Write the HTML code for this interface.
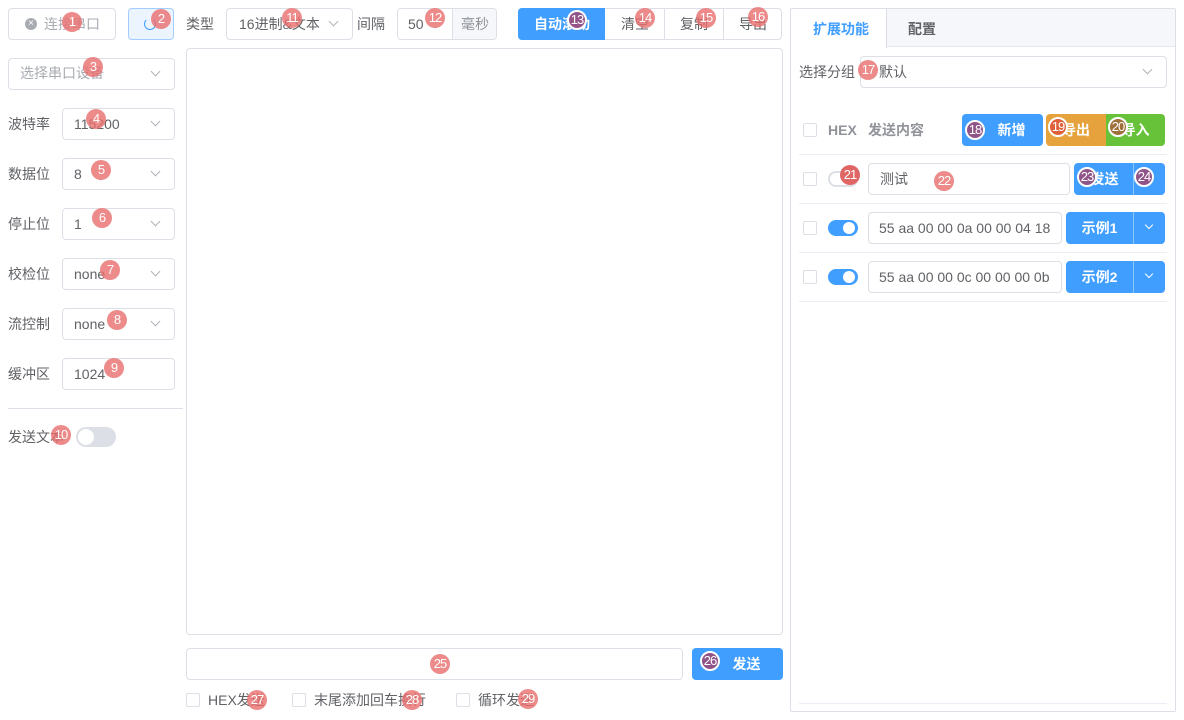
<!DOCTYPE html><html><head><meta charset="utf-8"><style>
*{box-sizing:border-box;margin:0;padding:0}
body{width:1184px;height:720px;background:#fff;position:relative;overflow:hidden;font-family:"Liberation Sans","Noto Sans CJK SC",sans-serif;font-size:14px;color:#606266}
.a{position:absolute}
.box{position:absolute;border:1px solid #dcdfe6;border-radius:4px;background:#fff}
.t{position:absolute;white-space:nowrap;line-height:20px}
.arr{position:absolute;width:7px;height:7px;border-right:1px solid #b0b3b8;border-bottom:1px solid #b0b3b8;transform:rotate(45deg)}
.b{position:absolute;width:20px;height:20px;border-radius:50%;background:rgba(232,110,110,.8);color:#fff;font-size:13px;text-align:center;line-height:20px;transform:translate(-10px,-10px);letter-spacing:-1px}
.p{background:rgba(150,80,130,.95);border:2px solid #fff;line-height:16px}
.cb{position:absolute;width:14px;height:14px;border:1px solid #dcdfe6;border-radius:2px;background:#fff}
.hr{position:absolute;height:1px;background:#ebeef5}
.btn{position:absolute;background:#409eff;color:#fff;text-align:center;font-weight:bold}
</style></head><body>
<!-- top left -->
<div class="box" style="left:8px;top:8px;width:108px;height:32px"></div>
<div class="a" style="left:25px;top:18px;width:12px;height:12px;border-radius:50%;background:#a8abb2;color:#fff;font-size:10px;line-height:12px;text-align:center">×</div>
<div class="t" style="left:44px;top:14px;color:#a8abb2">连接串口</div>
<div class="box" style="left:128px;top:8px;width:46px;height:32px;background:#ecf5ff;border-color:#a0cfff"></div>
<div class="a" style="left:144px;top:18px;width:12px;height:12px;border:1.5px solid #409eff;border-radius:50%;border-top-color:transparent"></div>
<div class="t" style="left:186px;top:14px">类型</div>
<div class="box" style="left:226px;top:8px;width:127px;height:32px"></div>
<div class="t" style="left:239px;top:14px">16进制&amp;文本</div>
<div class="arr" style="left:330px;top:18px"></div>
<div class="t" style="left:357px;top:14px">间隔</div>
<div class="box" style="left:397px;top:8px;width:100px;height:32px"></div>
<div class="a" style="left:452px;top:9px;width:44px;height:30px;background:#f5f7fa;border-left:1px solid #dcdfe6;border-radius:0 4px 4px 0"></div>
<div class="t" style="left:408px;top:14px">50</div>
<div class="t" style="left:461px;top:14px;color:#909399">毫秒</div>
<div class="box" style="left:518px;top:8px;width:264px;height:32px"></div>
<div class="a" style="left:518px;top:8px;width:87px;height:32px;background:#409eff;border-radius:4px 0 0 4px"></div>
<div class="t" style="left:534px;top:14px;color:#fff;font-weight:bold">自动滚动</div>
<div class="a" style="left:664px;top:9px;width:1px;height:30px;background:#dcdfe6"></div>
<div class="a" style="left:723px;top:9px;width:1px;height:30px;background:#dcdfe6"></div>
<div class="t" style="left:621px;top:14px">清空</div>
<div class="t" style="left:680px;top:14px">复制</div>
<div class="t" style="left:739px;top:14px">导出</div>
<!-- left column -->
<div class="box" style="left:8px;top:58px;width:167px;height:32px"></div>
<div class="t" style="left:20px;top:63px;color:#a8abb2">选择串口设备</div>
<div class="arr" style="left:152px;top:68px"></div>
<div class="t" style="left:8px;top:114px">波特率</div><div class="box" style="left:62px;top:108px;width:113px;height:32px"></div><div class="t" style="left:74px;top:114px">115200</div><div class="arr" style="left:152px;top:118px"></div>
<div class="t" style="left:8px;top:164px">数据位</div><div class="box" style="left:62px;top:158px;width:113px;height:32px"></div><div class="t" style="left:74px;top:164px">8</div><div class="arr" style="left:152px;top:168px"></div>
<div class="t" style="left:8px;top:214px">停止位</div><div class="box" style="left:62px;top:208px;width:113px;height:32px"></div><div class="t" style="left:74px;top:214px">1</div><div class="arr" style="left:152px;top:218px"></div>
<div class="t" style="left:8px;top:264px">校检位</div><div class="box" style="left:62px;top:258px;width:113px;height:32px"></div><div class="t" style="left:74px;top:264px">none</div><div class="arr" style="left:152px;top:268px"></div>
<div class="t" style="left:8px;top:314px">流控制</div><div class="box" style="left:62px;top:308px;width:113px;height:32px"></div><div class="t" style="left:74px;top:314px">none</div><div class="arr" style="left:152px;top:318px"></div>
<div class="t" style="left:8px;top:364px">缓冲区</div><div class="box" style="left:62px;top:358px;width:113px;height:32px"></div><div class="t" style="left:74px;top:364px">1024</div>
<div class="hr" style="left:8px;top:408px;width:175px;background:#dcdfe6"></div>
<div class="t" style="left:8px;top:427px">发送文本</div>
<div class="a" style="left:76px;top:427px;width:40px;height:20px;border-radius:10px;background:#dcdfe6"></div>
<div class="a" style="left:78px;top:429px;width:16px;height:16px;border-radius:50%;background:#fff"></div>
<!-- center -->
<div class="box" style="left:186px;top:48px;width:597px;height:587px"></div>
<div class="box" style="left:186px;top:648px;width:497px;height:32px"></div>
<div class="btn" style="left:692px;top:648px;width:91px;height:32px;border-radius:4px;line-height:32px;padding-left:18px">发送</div>
<div class="cb" style="left:186px;top:693px"></div><div class="t" style="left:208px;top:690px">HEX发送</div>
<div class="cb" style="left:292px;top:693px"></div><div class="t" style="left:314px;top:690px">末尾添加回车换行</div>
<div class="cb" style="left:456px;top:693px"></div><div class="t" style="left:478px;top:690px">循环发送</div>
<!-- right panel -->
<div class="box" style="left:790px;top:8px;width:386px;height:704px;border-radius:2px"></div>
<div class="a" style="left:791px;top:9px;width:384px;height:38px;background:#f5f7fa;border-bottom:1px solid #e4e7ed"></div>
<div class="a" style="left:791px;top:9px;width:96px;height:39px;background:#fff;border-right:1px solid #dcdfe6"></div>
<div class="t" style="left:813px;top:19px;color:#409eff;font-weight:bold">扩展功能</div>
<div class="t" style="left:908px;top:19px;font-weight:bold">配置</div>
<div class="t" style="left:799px;top:62px">选择分组</div>
<div class="box" style="left:860px;top:56px;width:307px;height:32px"></div>
<div class="t" style="left:879px;top:62px">默认</div>
<div class="arr" style="left:1144px;top:66px"></div>
<div class="cb" style="left:803px;top:123px"></div>
<div class="t" style="left:828px;top:120px;font-weight:bold;color:#909399">HEX</div>
<div class="t" style="left:868px;top:120px;font-weight:bold;color:#909399">发送内容</div>
<div class="btn" style="left:962px;top:114px;width:81px;height:32px;border-radius:4px;line-height:32px;padding-left:18px">新增</div>
<div class="btn" style="left:1046px;top:114px;width:60px;height:32px;border-radius:4px 0 0 4px;line-height:32px;background:#e6a23c">导出</div>
<div class="btn" style="left:1106px;top:114px;width:59px;height:32px;border-radius:0 4px 4px 0;line-height:32px;background:#67c23a">导入</div>
<div class="hr" style="left:799px;top:154px;width:368px"></div>
<div class="hr" style="left:799px;top:203px;width:368px"></div>
<div class="hr" style="left:799px;top:252px;width:368px"></div>
<div class="hr" style="left:799px;top:301px;width:368px"></div>
<div class="hr" style="left:799px;top:703px;width:368px"></div>
<!-- row1 -->
<div class="cb" style="left:803px;top:172px"></div>
<div class="a" style="left:828px;top:171px;width:30px;height:16px;border-radius:8px;border:2px solid #dcdfe6"></div>
<div class="box" style="left:868px;top:163px;width:202px;height:32px"></div>
<div class="t" style="left:880px;top:169px">测试</div>
<div class="btn" style="left:1074px;top:163px;width:91px;height:32px;border-radius:4px;line-height:32px;padding-right:30px">发送</div>
<div class="a" style="left:1133px;top:163px;width:1px;height:32px;background:#8cc5ff"></div>
<!-- row2 -->
<div class="cb" style="left:803px;top:221px"></div>
<div class="a" style="left:828px;top:220px;width:30px;height:16px;border-radius:8px;background:#409eff"></div><div class="a" style="left:843px;top:222px;width:12px;height:12px;border-radius:50%;background:#fff"></div>
<div class="box" style="left:868px;top:212px;width:194px;height:32px"></div>
<div class="t" style="left:879px;top:218px">55 aa 00 00 0a 00 00 04 18</div>
<div class="btn" style="left:1066px;top:212px;width:99px;height:32px;border-radius:4px;line-height:32px;padding-right:32px">示例1</div>
<div class="a" style="left:1133px;top:212px;width:1px;height:32px;background:#8cc5ff"></div>
<div class="a" style="left:1146px;top:222px;width:6px;height:6px;border-right:1px solid #fff;border-bottom:1px solid #fff;transform:rotate(45deg)"></div>
<!-- row3 -->
<div class="cb" style="left:803px;top:270px"></div>
<div class="a" style="left:828px;top:269px;width:30px;height:16px;border-radius:8px;background:#409eff"></div><div class="a" style="left:843px;top:271px;width:12px;height:12px;border-radius:50%;background:#fff"></div>
<div class="box" style="left:868px;top:261px;width:194px;height:32px"></div>
<div class="t" style="left:879px;top:267px">55 aa 00 00 0c 00 00 00 0b</div>
<div class="btn" style="left:1066px;top:261px;width:99px;height:32px;border-radius:4px;line-height:32px;padding-right:32px">示例2</div>
<div class="a" style="left:1133px;top:261px;width:1px;height:32px;background:#8cc5ff"></div>
<div class="a" style="left:1146px;top:271px;width:6px;height:6px;border-right:1px solid #fff;border-bottom:1px solid #fff;transform:rotate(45deg)"></div>
<!-- badges -->
<div class="b" style="left:72px;top:22px">1</div>
<div class="b" style="left:161px;top:19px">2</div>
<div class="b" style="left:93px;top:67px">3</div>
<div class="b" style="left:96px;top:119px">4</div>
<div class="b" style="left:101px;top:170px">5</div>
<div class="b" style="left:102px;top:218px">6</div>
<div class="b" style="left:110px;top:270px">7</div>
<div class="b" style="left:117px;top:320px">8</div>
<div class="b" style="left:114px;top:368px">9</div>
<div class="b" style="left:61px;top:435px">10</div>
<div class="b" style="left:292px;top:18px">11</div>
<div class="b" style="left:435px;top:18px">12</div>
<div class="b p" style="left:577px;top:20px">13</div>
<div class="b" style="left:645px;top:18px">14</div>
<div class="b" style="left:706px;top:18px">15</div>
<div class="b" style="left:758px;top:17px">16</div>
<div class="b" style="left:868px;top:70px">17</div>
<div class="b p" style="left:975px;top:130px">18</div>
<div class="b p" style="left:1058px;top:127px;background:#e0603a">19</div>
<div class="b p" style="left:1118px;top:127px;background:#a0703a">20</div>
<div class="b" style="left:850px;top:175px;background:#e06666">21</div>
<div class="b" style="left:944px;top:181px">22</div>
<div class="b p" style="left:1087px;top:177px">23</div>
<div class="b p" style="left:1144px;top:177px">24</div>
<div class="b" style="left:440px;top:664px">25</div>
<div class="b p" style="left:710px;top:661px">26</div>
<div class="b" style="left:257px;top:700px">27</div>
<div class="b" style="left:412px;top:700px">28</div>
<div class="b" style="left:528px;top:699px">29</div>
</body></html>
